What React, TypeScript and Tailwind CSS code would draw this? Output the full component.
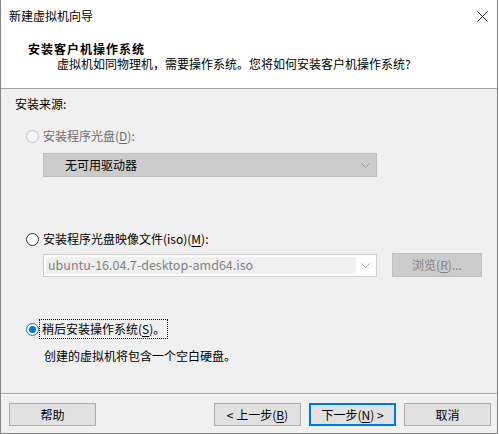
import { ReactNode } from 'react'

const font = { fontFamily: '"Noto Sans CJK SC", "Noto Sans", sans-serif' }

function Chevron({ color = '#a0a0a0' }: { color?: string }) {
  return (
    <svg width="9" height="5" viewBox="0 0 9 5" fill="none">
      <path d="M0.5 0.5L4.5 4.5L8.5 0.5" stroke={color} strokeWidth="1" />
    </svg>
  )
}

function Radio({ state }: { state: 'disabled' | 'off' | 'on' }) {
  if (state === 'on') {
    return (
      <span className="w-[13px] h-[13px] rounded-full border border-[#0078d7] bg-white flex items-center justify-center shrink-0">
        <span className="w-[7px] h-[7px] rounded-full bg-[#0078d7]" />
      </span>
    )
  }
  return (
    <span
      className={
        state === 'disabled'
          ? 'w-[13px] h-[13px] rounded-full border border-[#c4c4c4] bg-[#f7f7f7] shrink-0'
          : 'w-[13px] h-[13px] rounded-full border border-[#333333] bg-white shrink-0'
      }
    />
  )
}

function Key({ children }: { children: ReactNode }) {
  return <span className="underline underline-offset-2">{children}</span>
}

function FooterButton({
  children,
  primary,
}: {
  children: ReactNode
  primary?: boolean
}) {
  return (
    <button
      className={
        primary
          ? 'w-[87px] h-[23px] border-2 border-[#0078d7] bg-[#e1e1e1] text-black text-[12px] leading-none flex items-center justify-center'
          : 'w-[87px] h-[23px] border border-[#adadad] bg-[#e1e1e1] text-black text-[12px] leading-none flex items-center justify-center'
      }
    >
      {children}
    </button>
  )
}

export default function App() {
  return (
    <div
      style={font}
      className="w-[498px] h-[434px] bg-[#f0f0f0] border-l border-r border-b border-[#858585] flex flex-col text-[12px] text-black"
    >
      <div className="h-[89px] bg-white border-b border-[#a0a0a0] flex flex-col pl-[8px] pt-[8px] shrink-0">
        <div className="flex items-center h-4 pr-[8px]">
          <span className="leading-4 flex-1">新建虚拟机向导</span>
          <svg width="11" height="11" viewBox="0 0 11 11" className="mr-[1px]">
            <path d="M0.5 0.5L10.5 10.5M10.5 0.5L0.5 10.5" stroke="#222" strokeWidth="1" />
          </svg>
        </div>
        <div className="mt-[17px] ml-[19px] h-[15px] leading-[15px] font-bold tracking-[1px]">
          安装客户机操作系统
        </div>
        <div className="ml-[48px] h-4 leading-4">
          虚拟机如同物理机，需要操作系统。您将如何安装客户机操作系统?
        </div>
      </div>

      <div className="flex-1 flex flex-col pt-[7px] pl-[14px]">
        <div className="leading-4 h-4">安装来源:</div>

        <div className="mt-[16px] ml-[11px] h-4 flex items-center gap-[4px] text-[#6d6d6d]">
          <Radio state="disabled" />
          <span className="leading-4">
            安装程序光盘(<Key>D</Key>):
          </span>
        </div>

        <div className="mt-[9px] ml-[28px] w-[334px] h-[24px] bg-[#cccccc] border border-[#bfbfbf] flex items-center pl-[21px] pr-[6px]">
          <span className="flex-1 leading-4">无可用驱动器</span>
          <Chevron color="#9a9a9a" />
        </div>

        <div className="mt-[54px] ml-[11px] h-4 flex items-center gap-[4px]">
          <Radio state="off" />
          <span className="leading-4">
            安装程序光盘映像文件(iso)(<Key>M</Key>):
          </span>
        </div>

        <div className="mt-[6px] h-[24px] flex items-start">
          <div className="mt-[1px] ml-[28px] w-[334px] h-[23px] border border-[#d0d0d0] bg-white p-[2px] flex">
            <div className="flex-1 bg-[#f0f0f0] flex items-center pl-[2px] text-[#808080] text-[12.5px]">
              ubuntu-16.04.7-desktop-amd64.iso
            </div>
            <div className="w-[18px] flex items-center justify-center">
              <Chevron color="#a8a8a8" />
            </div>
          </div>
          <div className="ml-[15px] w-[90px] h-[24px] bg-[#cccccc] border border-[#bfbfbf] flex items-center justify-center text-[#838383]">
            浏览(<Key>R</Key>)...
          </div>
        </div>

        <div className="mt-[44px] ml-[11px] h-4 flex items-center gap-[2px]">
          <Radio state="on" />
          <span className="leading-4 outline-1 outline-dotted outline-black outline-offset-[1px] px-[1px]">
            稍后安装操作系统(<Key>S</Key>)。
          </span>
        </div>

        <div className="mt-[11px] ml-[29px] leading-4">创建的虚拟机将包含一个空白硬盘。</div>
      </div>

      <div className="h-[40px] border-t border-[#a0a0a0] shrink-0">
        <div className="h-full border-t border-white flex items-start pt-[8px] pl-[8px] pr-[6px]">
          <FooterButton>帮助</FooterButton>
          <div className="flex-1" />
          <div className="flex gap-[8px]">
            <FooterButton>
              &lt; 上一步(<Key>B</Key>)
            </FooterButton>
            <FooterButton primary>
              下一步(<Key>N</Key>) &gt;
            </FooterButton>
            <FooterButton>取消</FooterButton>
          </div>
        </div>
      </div>
    </div>
  )
}
